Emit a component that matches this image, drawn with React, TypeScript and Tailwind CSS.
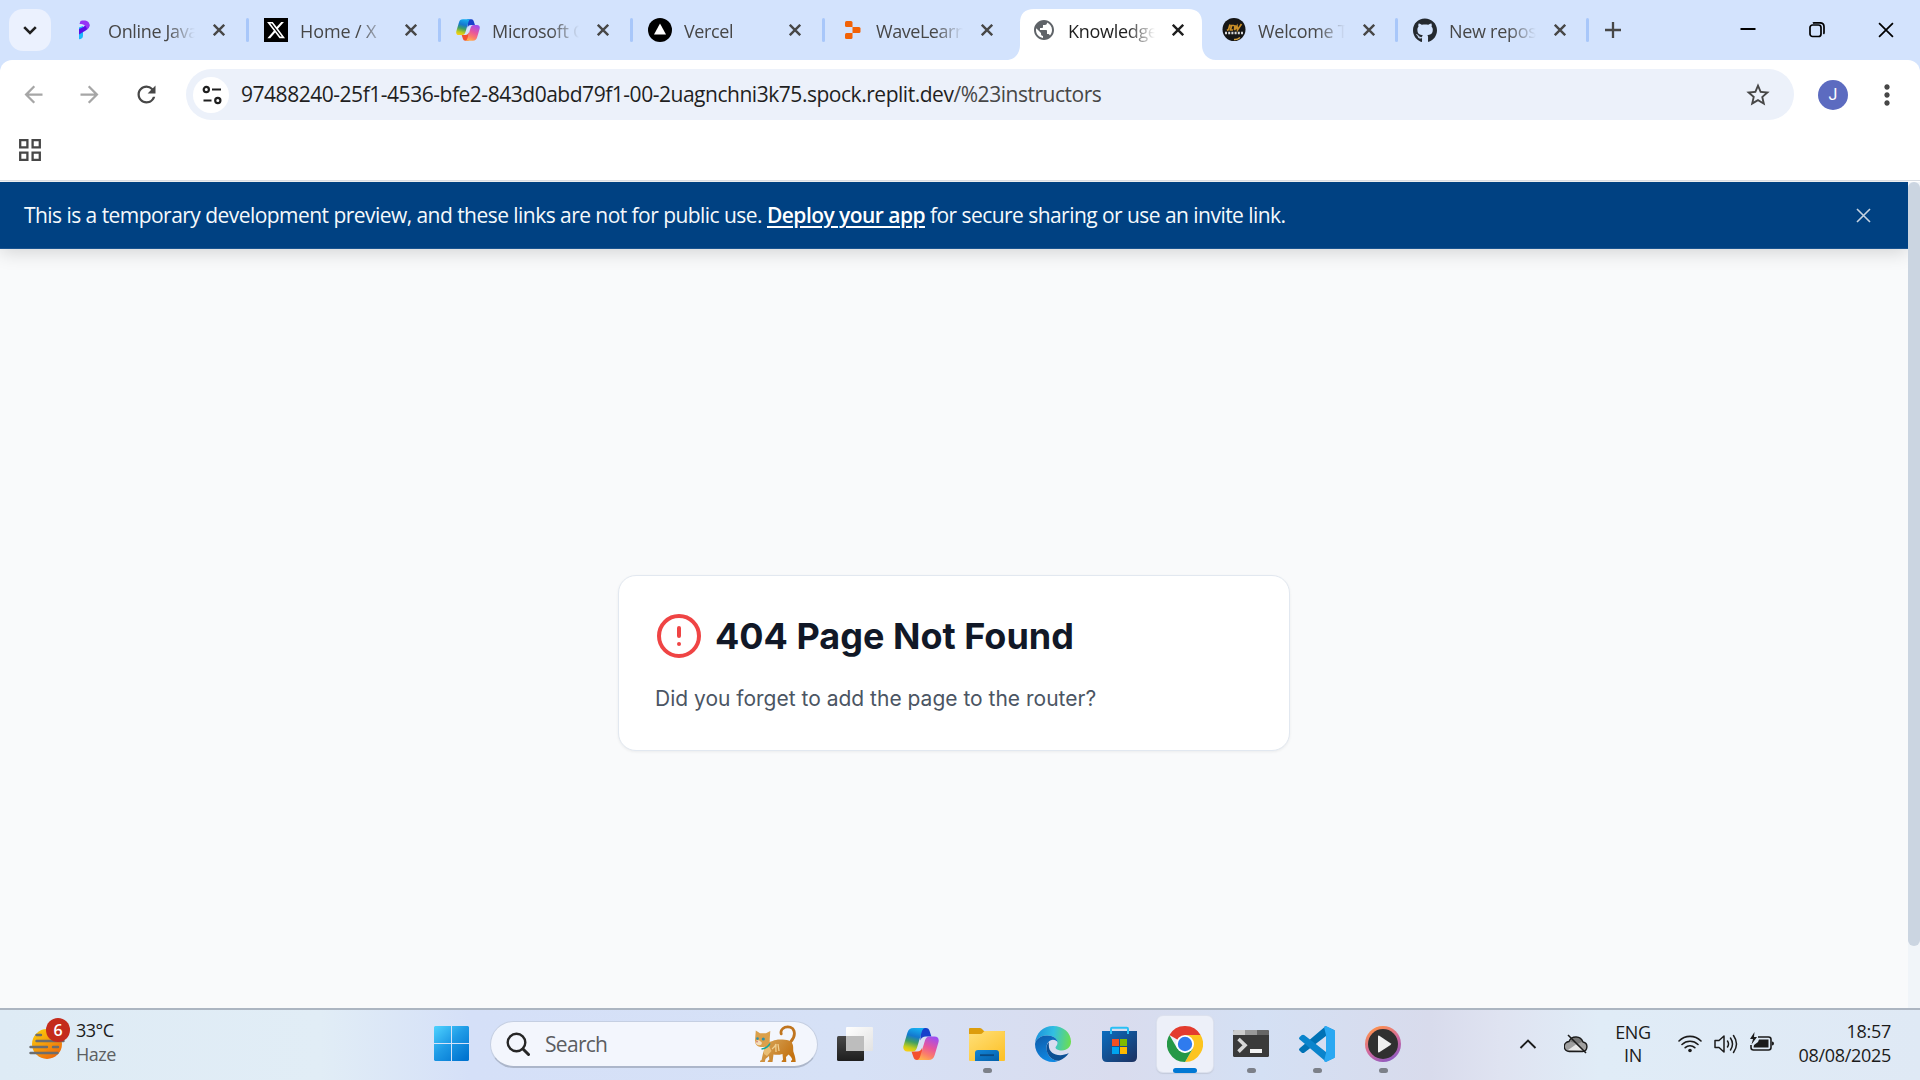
import React from "react";
import { MdArrowBack, MdArrowForward, MdRefresh, MdStarBorder, MdPublic, MdMoreVert } from "react-icons/md";
import { FaGithub, FaXTwitter } from "react-icons/fa6";

const UI = "font-['Segoe_UI','Open_Sans',sans-serif]";

function Cross({ className, s = 11, w = 2.4 }: { className?: string; s?: number; w?: number }) {
  return (
    <svg width={s} height={s} viewBox="0 0 12 12" className={className} fill="none" stroke="currentColor" strokeWidth={w}>
      <path d="M.8 .8 11.2 11.2M11.2 .8 .8 11.2" />
    </svg>
  );
}

function Copilot({ size, id }: { size: number; id: string }) {
  return (
    <svg width={size} height={size} viewBox="0 0 36 36">
      <defs>
        <linearGradient id={id + "a"} x1=".6" y1="0" x2=".35" y2="1">
          <stop offset="0" stopColor="#16aef0" />
          <stop offset=".35" stopColor="#1478cf" />
          <stop offset=".6" stopColor="#3f9f63" />
          <stop offset=".85" stopColor="#c2cc1c" />
          <stop offset="1" stopColor="#f4cf14" />
        </linearGradient>
        <linearGradient id={id + "b"} x1=".7" y1="0" x2=".3" y2="1">
          <stop offset="0" stopColor="#a04ef0" />
          <stop offset=".45" stopColor="#e8569b" />
          <stop offset=".75" stopColor="#fb7d6a" />
          <stop offset="1" stopColor="#ffb04e" />
        </linearGradient>
      </defs>
      <path d="M17 2h6c2 0 3 1.200 3.600 3l1.800 5.500h-5.500c-3 0-4.500 1-5.400 4z" fill="#173fcb" />
      <path d="M19 34h-5c-2 0-3-1.200-3.600-3L8.500 25.500H14c3 0 4.300-1.500 5.200-4z" fill="#f4502f" />
      <path d="M10.500 2H22c-2 .4-2.700 2-3.300 4l-4.500 15c-.9 3-2 4.500-5 4.500H4.500C1 25.500-.4 23 .6 19.500L4.300 7C5.300 3.500 7 2 10.500 2z" fill={`url(#${id}a)`} />
      <path d="M25.500 34H14c2-.4 2.700-2 3.300-4l4.500-15c.9-3 2-4.500 5-4.500h4.700c3.500 0 4.900 2.500 3.900 6L31.700 29c-1 3.500-2.700 5-6.200 5z" fill={`url(#${id}b)`} />
    </svg>
  );
}

const Programiz = () => (
  <svg width="24" height="24" viewBox="0 0 24 24">
    <path d="M7 9.500 11 8v9.500c0 2.500-1.500 3.800-4 3.800z" fill="#1ab8fb" />
    <path d="M7 13.500V11c4.500-2 6.500-3.200 6.500-4.500h4c0 5-4.500 6-10.500 10z" fill="#5a0fe8" />
    <path d="M8.500 3c5-1.500 9.500.5 9 4.500-.2 1.800-1 3-2.500 4C14.500 8 12 6 7.500 6z" fill="#9733f5" />
  </svg>
);

const XLogo = () => (
  <div className="flex h-6 w-6 items-center justify-center bg-black">
    <FaXTwitter size={20} className="text-white" />
  </div>
);

const VercelIcon = () => (
  <svg width="24" height="24" viewBox="0 0 24 24">
    <circle cx="12" cy="12" r="12" fill="#000" />
    <path d="M12 5.500 18 16.500H6z" fill="#fff" />
  </svg>
);

const Replit = () => (
  <svg width="24" height="24" viewBox="0 0 24 24" fill="#f26207">
    <path d="M5 4.500Q5 3 6.500 3H11q1.500 0 1.500 1.500V9H6.500Q5 9 5 7.500z" />
    <path d="M12.500 9H19q1.500 0 1.500 1.500v3Q20.500 15 19 15h-6.500z" />
    <path d="M5 16.500Q5 15 6.500 15h6v4.500Q12.500 21 11 21H6.500Q5 21 5 19.500z" />
  </svg>
);

const JW = () => (
  <svg width="24" height="24" viewBox="0 0 24 24">
    <circle cx="12" cy="11.500" r="11.500" fill="#161616" />
    <path d="M5 12.500l1.500-1L8 6.500M12 7.500H9.500L8.500 12H11M13 7l-.5 5L15 8l.5 4L19.500 6" fill="none" stroke="#c98f28" strokeWidth="1.700" />
    <path d="M3 15h18" stroke="#d8d8d8" strokeWidth="2.600" strokeDasharray="2 1.200" />
    <path d="M12 21.500q3 .5 6-2" fill="none" stroke="#d9a441" strokeWidth="1.500" />
  </svg>
);

type TabInfo = { title: string; icon: React.ReactNode; sep: boolean; cls: string; txt: string; active?: boolean };

const tabs: TabInfo[] = [
  { title: "Online Java", icon: <Programiz />, sep: true, cls: "w-[192px]", txt: "tracking-[-0.35px]" },
  { title: "Home / X", icon: <XLogo />, sep: true, cls: "w-[192px]", txt: "tracking-[-0.1px]" },
  { title: "Microsoft Co", icon: <Copilot size={26} id="t" />, sep: true, cls: "w-[192px]", txt: "tracking-[-0.3px]" },
  { title: "Vercel", icon: <VercelIcon />, sep: true, cls: "w-[192px]", txt: "tracking-[-0.4px]" },
  { title: "WaveLearn", icon: <Replit />, sep: false, cls: "w-[192px]", txt: "tracking-[-0.45px]" },
  { title: "Knowledge", icon: <MdPublic size={26} className="text-[#5f6368]" />, sep: false, cls: "w-[190px]", txt: "tracking-[-0.3px]", active: true },
  { title: "Welcome To", icon: <JW />, sep: true, cls: "w-[191px]", txt: "tracking-[-0.3px]" },
  { title: "New reposi", icon: <FaGithub size={25} className="text-[#24292f]" />, sep: true, cls: "w-[191px]", txt: "tracking-[-0.3px]" },
];

function Tab({ t }: { t: TabInfo }) {
  return (
    <div className={`relative flex h-[60px] shrink-0 items-center pl-4 ${t.cls}`}>
      {t.active && (
        <svg className="absolute top-[9px] left-[-10px]" width="210" height="51" viewBox="0 0 210 51">
          <path d="M0 51C9 51 14 44 14 36V14Q14 0 28 0H182Q196 0 196 14V36C196 44 201 51 210 51z" fill="#fff" />
        </svg>
      )}
      <div className="relative flex h-6 w-6 shrink-0 items-center justify-center">{t.icon}</div>
      <span
        className={`relative ml-3 w-[87px] shrink-0 overflow-hidden pt-[2px] text-[18px] leading-[28px] whitespace-nowrap [mask-image:linear-gradient(to_right,#000_68%,transparent_100%)] ${t.txt} ${t.active ? "text-[#1f1f1f]" : "text-[#474747]"}`}
      >
        {t.title}
      </span>
      <span className={`relative flex h-6 w-6 shrink-0 items-center justify-center ${t.active ? "ml-[11px] text-[#1f1f1f]" : "ml-3 text-[#474747]"}`}>
        <Cross s={12} w={2.4} />
      </span>
      {t.sep && <span className="mr-[-1px] ml-auto h-6 w-[3px] rounded-full bg-[#a8c7fa]" />}
    </div>
  );
}

function TabStrip() {
  return (
    <div className="flex h-[60px] items-center bg-[#d3e3fd]">
      <div className="ml-[9px] flex h-[42px] w-[42px] items-center justify-center rounded-[14px] bg-[#ebf1fe]">
        <svg width="14" height="9" viewBox="0 0 14 9" fill="none" stroke="#1f1f1f" strokeWidth="2.600">
          <path d="m1.200 1.200 5.800 5.800 5.800-5.800" />
        </svg>
      </div>
      <div className="ml-[5px] flex">
        {tabs.map((t) => (
          <Tab key={t.title} t={t} />
        ))}
      </div>
      <svg className="ml-[17px]" width="16" height="16" viewBox="0 0 16 16" stroke="#474747" strokeWidth="2.300">
        <path d="M8 0v16M0 8h16" />
      </svg>
      <svg className="ml-[119px]" width="16" height="16" viewBox="0 0 16 16">
        <path d="M.5 7h15" stroke="#000" strokeWidth="2" />
      </svg>
      <svg className="ml-[53px]" width="16" height="16" viewBox="0 0 16 16" fill="none" stroke="#000" strokeWidth="1.700">
        <rect x="1" y="3" width="11" height="11.500" rx="2.500" />
        <path d="M4 1.300q.5-.5 1.500-.5H11q4 0 4 4v5.600q0 1-.6 1.500" />
      </svg>
      <Cross s={16} w={1.300} className="ml-[53px] text-black" />
    </div>
  );
}

function Toolbar() {
  return (
    <div className="bg-[#d3e3fd]">
      <div className="flex h-[120px] flex-col rounded-t-[12px] bg-white">
        <div className="mt-[9px] flex h-[51px] items-center">
          <MdArrowBack size={27} className="ml-5 text-[#a6a6a6]" />
          <MdArrowForward size={27} className="ml-[29px] text-[#a6a6a6]" />
          <MdRefresh size={27} className="ml-[30px] text-[#474747]" />
          <div className="ml-[26px] flex h-[51px] w-[1608px] items-center rounded-full bg-[#ecf1fa]">
            <div className="ml-[7px] flex h-9 w-9 items-center justify-center rounded-full bg-white">
              <svg className="ml-px" width="20" height="20" viewBox="0 0 20 20" fill="none" stroke="#1f1f1f" strokeWidth="2.200">
                <circle cx="4.300" cy="4.500" r="2.600" />
                <path d="M10 4.500h9M1.500 15.500h8" />
                <circle cx="15.800" cy="15.500" r="2.600" />
              </svg>
            </div>
            <span className="ml-3 pb-px text-[21px] leading-[30px] tracking-[-0.47px] whitespace-nowrap text-[#1f1f1f]">
              97488240-25f1-4536-bfe2-843d0abd79f1-00-2uagnchni3k75.spock.replit.dev
              <span className="text-[#474747]">/%23instructors</span>
            </span>
            <MdStarBorder size={28} className="mr-[22px] ml-auto text-[#474747]" />
          </div>
          <div className="ml-6 flex h-[30px] w-[30px] items-center justify-center rounded-full bg-[#5c6bc0] font-['Roboto',sans-serif] text-[16px] text-white">J</div>
          <MdMoreVert size={32} className="ml-[23px] text-[#474747]" />
        </div>
        <svg className="mt-[19px] ml-[19px]" width="22" height="22" viewBox="0 0 22 22" fill="none" stroke="#474747" strokeWidth="2.300">
          <path d="M1.200 1.200h7.200v7.200H1.200zM13.600 1.200h7.200v7.200h-7.200zM1.200 13.600h7.200v7.200H1.200zM13.600 13.600h7.200v7.200h-7.200z" />
        </svg>
      </div>
    </div>
  );
}

function Page() {
  return (
    <div className="flex h-[828px] border-t border-[#d9dde3]">
      <div className="flex w-[1908px] flex-col overflow-hidden bg-[#f9fafb]">
        <div className="relative mt-px flex h-[67px] items-center border-b border-[#1a5490] bg-[#004182] pl-6 shadow-[0_3px_18px_rgba(0,0,0,0.16)]">
          <span className="text-[21px] leading-[30px] tracking-[-0.545px] whitespace-nowrap text-[#f5f9fc]">
            This is a temporary development preview, and these links are not for public use.{" "}
            <span className="font-semibold text-white underline decoration-2 underline-offset-[3px]">Deploy your app</span> for secure sharing or use an invite link.
          </span>
          <Cross s={15} w={1.300} className="mr-[37px] ml-auto text-[#c5d3e2]" />
        </div>
        <div className="flex grow justify-center pt-[326px]">
          <div className="h-[176px] w-[672px] rounded-[18px] border border-[#e2e8f0] bg-white px-9 pt-9 font-['Inter',sans-serif] shadow-[0_1px_3px_rgba(0,0,0,0.06)]">
            <div className="flex h-12 items-center">
              <svg width="48" height="48" viewBox="0 0 24 24" fill="none" stroke="#ef4444" strokeWidth="2" strokeLinecap="round" strokeLinejoin="round">
                <circle cx="12" cy="12" r="10" />
                <path d="M12 8v4M12 16h.01" />
              </svg>
              <h1 className="ml-3 text-[36px] leading-[48px] font-bold whitespace-nowrap text-[#111827]">404 Page Not Found</h1>
            </div>
            <p className="mt-6 text-[21px] leading-[30px] whitespace-nowrap text-[#4b5563]">Did you forget to add the page to the router?</p>
          </div>
        </div>
      </div>
      <div className="mt-px w-3 bg-[#f1f5f9]">
        <div className="h-[764px] rounded-full bg-[#cbd5e1]" />
      </div>
    </div>
  );
}

const Cat = () => (
  <svg width="46" height="38" viewBox="0 0 46 38">
    <defs>
      <linearGradient id="fur" x1="0" y1="0" x2="1" y2=".5">
        <stop offset="0" stopColor="#dca552" />
        <stop offset=".45" stopColor="#cf9240" />
        <stop offset="1" stopColor="#c47312" />
      </linearGradient>
    </defs>
    <path d="M38.500 17c3-3 4.500-7.500 3.500-11C41 2.300 36.500 1 33 2.300c-3.200 1.200-4.600 4-3.800 6.500" fill="none" stroke="#c0751f" strokeWidth="2.800" strokeLinecap="round" />
    <path d="M14 18c5-1 8-3.500 14-3.500 7 0 12 .5 13 6 .5 3-.3 5 1 8 1 2.500 1.500 5 1.700 8.500H39q-.4-1.500 1.200-2c-.3-2.500-1.700-4-3.700-5.500L34 32l.3 5h-4.600q-.4-1.500 1.300-2l-.5-6c-3.500 1-6.500 1-9 .5L20.500 37h-4.800q-.2-1.600 1.600-2L17 31l-3.500 3-.7 3H8q-.2-1.600 1.600-2c.7-4 1.400-7 2.400-10z" fill="url(#fur)" />
    <path d="M3.800 5.500 8 8.300l6-.1L18.300 6l-.6 8.500c.5 4.500-2.700 7.500-7.200 7.500-5 0-7.800-2.500-7.500-7z" fill="#dba04a" />
    <path d="M3.500 16.500c1.500-2 4-1.500 5 0 2 .5 1.700 3 0 3.600-2.200.6-5.300-.4-5-3.600z" fill="#f3ddbb" />
    <path d="m12 24 5-3 2.500 5-4.500 5-3-2z" fill="#e9bd74" />
    <path d="M20 24q3-2 4-5-.3 4 0 8M26 19l1 7" fill="none" stroke="#f0cf90" strokeWidth="1.300" />
    <path d="M9.500 24c4-.5 7-2.500 8.500-5.500" fill="none" stroke="#12a59a" strokeWidth="1.500" />
    <circle cx="5.500" cy="13.600" r="1.300" fill="#2d8fa8" />
    <circle cx="11.300" cy="14" r="1.600" fill="#2d8fa8" />
    <circle cx="5" cy="16.800" r=".8" fill="#c9605a" />
  </svg>
);

const StartLogo = () => (
  <svg width="36" height="36" viewBox="0 0 36 36">
    <defs>
      <linearGradient id="win" gradientUnits="userSpaceOnUse" x1="0" y1="0" x2="30" y2="34">
        <stop offset="0" stopColor="#4fd3ff" />
        <stop offset=".5" stopColor="#1f9be6" />
        <stop offset="1" stopColor="#0074d0" />
      </linearGradient>
    </defs>
    <path d="M1 0H17v17H0V1zM18 0h16l1 1V17H18zM0 18H17v17H1l-1-1zM18 18h17v16l-1 1H18z" fill="url(#win)" />
  </svg>
);

const TaskView = () => (
  <svg width="36" height="36" viewBox="0 0 36 36">
    <defs>
      <linearGradient id="tv" x1="0" y1="0" x2="0" y2="1">
        <stop offset="0" stopColor="#484848" />
        <stop offset="1" stopColor="#1e1e1e" />
      </linearGradient>
      <linearGradient id="tw" x1="0" y1="0" x2="1" y2="1">
        <stop offset="0" stopColor="#fff" />
        <stop offset="1" stopColor="#e2e2e2" />
      </linearGradient>
    </defs>
    <rect x="9" y="1" width="27" height="24" rx="1" fill="url(#tw)" />
    <rect x="0" y="10" width="27" height="25" rx="1.500" fill="url(#tv)" />
    <rect x="9" y="10" width="18" height="15" fill="#bdbdbd" />
  </svg>
);

const Explorer = () => (
  <svg width="36" height="36" viewBox="0 0 36 36">
    <defs>
      <linearGradient id="fo" x1="0" y1="0" x2=".8" y2="1">
        <stop offset="0" stopColor="#ffe07a" />
        <stop offset="1" stopColor="#fdc22a" />
      </linearGradient>
      <linearGradient id="fb" x1="0" y1="0" x2="1" y2="1">
        <stop offset="0" stopColor="#1286d8" />
        <stop offset="1" stopColor="#0560aa" />
      </linearGradient>
    </defs>
    <path d="M0 3q0-1 1-1h10q1.500 0 2.500 1.500L15 5h20q1 0 1 1v4H0z" fill="#dd9d0c" />
    <path d="M0 8h11q2 0 3-1.500L15.500 5H35q1 0 1 1v28q0 1-1 1H1q-1 0-1-1z" fill="url(#fo)" />
    <path d="M6 35V27q0-3 3-3h18q3 0 3 3v8z" fill="url(#fb)" />
    <path d="M11 29.200h14" stroke="#0b4a82" strokeWidth="1.800" />
  </svg>
);

const Edge = () => (
  <svg width="36" height="36" viewBox="0 0 36 36">
    <defs>
      <linearGradient id="e1" x1="0" y1=".4" x2="1" y2=".5">
        <stop offset="0" stopColor="#1c92dc" />
        <stop offset=".5" stopColor="#32bfe2" />
        <stop offset="1" stopColor="#6bde52" />
      </linearGradient>
      <linearGradient id="e2" x1="0" y1="0" x2=".4" y2="1">
        <stop offset="0" stopColor="#0e5aa8" />
        <stop offset="1" stopColor="#1088e2" />
      </linearGradient>
    </defs>
    <path d="M0 17C1 7 8 0 18 0c10.500 0 18 7 18 15.500 0 5.500-4 9-9 9-4.500 0-6.500-1.800-6.500-3 0-1 2-2 2-4.500C22.500 12.500 18 9.500 12 9.500 6 9.500 1.500 12.500 0 17z" fill="url(#e1)" />
    <path d="M0 18C1 12.500 6 9.500 12 9.500c6 0 10.500 3 10.500 7-.5-2-2.500-2.800-4.500-2.800-4 0-6.500 3.800-6.500 8C11.500 29 17 35 24 34.800 21.500 35.700 20 36 18 36 8 36 0 28 0 18z" fill="url(#e2)" />
    <path d="M14 16c-2 2-2.500 4-2.500 6C11.500 29 17 35 24 34.800c4.500-1.700 7.500-4.300 9.800-7.700-9 4.500-20 1.500-20-7.600 0-1.300 0-2.300.2-3.500z" fill="#0c4f94" />
  </svg>
);

const Store = () => (
  <svg className="ml-[-1px]" width="36" height="36" viewBox="0 0 36 36">
    <defs>
      <linearGradient id="st" x1="0" y1="0" x2="1" y2="1">
        <stop offset="0" stopColor="#0a6dc0" />
        <stop offset="1" stopColor="#1d3160" />
      </linearGradient>
    </defs>
    <path d="M1 5h35v26q0 5-5 5H6q-5 0-5-5z" fill="url(#st)" />
    <path d="M10 8V3q0-1.200 1.200-1.200h14.600Q27 1.800 27 3v5" fill="none" stroke="#2bc0f5" strokeWidth="2" />
    <path d="M11 13h7v7h-7z" fill="#f25022" />
    <path d="M19 13h7v7h-7z" fill="#7fba00" />
    <path d="M11 21h7v7h-7z" fill="#00a4ef" />
    <path d="M19 21h7v7h-7z" fill="#ffb900" />
  </svg>
);

const Chrome = () => (
  <svg width="36" height="36" viewBox="0 0 36 36">
    <path d="M18 18 2.410 9A18 18 0 0 1 33.590 9z" fill="#e33b2e" />
    <path d="M18 9H33.590A18 18 0 0 1 18 36L25.800 22.500z" fill="#fcc41f" />
    <path d="M2.410 9 10.200 22.500 18 27l7.800-4.500L18 36A18 18 0 0 1 2.410 9z" fill="#259847" />
    <circle cx="18" cy="18" r="9" fill="#fff" />
    <circle cx="18" cy="18" r="7.200" fill="#2f7bee" />
  </svg>
);

const Terminal = () => (
  <svg width="36" height="36" viewBox="0 0 36 36">
    <rect x="0" y="4" width="36" height="27" rx="1.500" fill="#3a3a3a" />
    <path d="M0 9V5.500Q0 4 1.500 4H12v5z" fill="#ccc" />
    <path d="M12 4h12v5H12z" fill="#999" />
    <path d="M24 4h10.500Q36 4 36 5.500V9H24z" fill="#666" />
    <path d="m5.500 13 6.500 6.300-6.500 6.300" fill="none" stroke="#d8d8d8" strokeWidth="3.600" />
    <path d="M17 23h12v4H17z" fill="#f2f2f2" />
  </svg>
);

const VSCode = () => (
  <svg width="36" height="36" viewBox="0 0 36 36">
    <path d="M26.500 .3 36 4.500 27 10 5.500 26.500q-1.500 1.200-3 0l-1.800-1.700q-1.400-1.300 0-2.600z" fill="#0072b5" />
    <path d="M27 35.800 36 31.500 27 26 5.500 9.300q-1.500-1.200-3 0L.7 11q-1.400 1.300 0 2.600z" fill="#0a84cc" />
    <path d="M27 0q-1.500.2-2 1l2 8v18l-2 8q.8.800 2 1l7.700-3.700Q36 31.600 36 30.500v-25q0-1.100-1.300-1.800z" fill="#2aa8f2" />
  </svg>
);

const Player = () => (
  <svg width="36" height="36" viewBox="0 0 36 36">
    <defs>
      <linearGradient id="pl" x1=".3" y1="0" x2=".8" y2="1">
        <stop offset="0" stopColor="#ff914a" />
        <stop offset=".5" stopColor="#d2699e" />
        <stop offset="1" stopColor="#8557c4" />
      </linearGradient>
    </defs>
    <circle cx="18" cy="18" r="18" fill="url(#pl)" />
    <circle cx="18" cy="18" r="15" fill="#303030" />
    <path d="M13 10.500v15q0 1.500 1.300.7L25.500 19q1-.8 0-1.700L14.300 9.800Q13 9 13 10.500z" fill="#f0f0f0" />
  </svg>
);

const apps: { name: string; icon: React.ReactNode; open?: boolean; active?: boolean }[] = [
  { name: "view", icon: <TaskView /> },
  { name: "copilot", icon: <Copilot size={36} id="b" /> },
  { name: "files", icon: <Explorer />, open: true },
  { name: "edge", icon: <Edge /> },
  { name: "store", icon: <Store /> },
  { name: "chrome", icon: <Chrome />, active: true },
  { name: "terminal", icon: <Terminal />, open: true },
  { name: "code", icon: <VSCode />, open: true },
  { name: "player", icon: <Player />, open: true },
];

function Weather() {
  return (
    <div className="ml-[28px] flex w-[406px] items-center pb-[5px]">
      <div className="relative h-[44px] w-[42px]">
        <svg width="42" height="44" viewBox="0 0 42 44">
          <defs>
            <linearGradient id="sun" x1="0" y1="0" x2=".7" y2="1">
              <stop offset="0" stopColor="#fcd30a" />
              <stop offset="1" stopColor="#ee6a0c" />
            </linearGradient>
          </defs>
          <circle cx="19" cy="24" r="15" fill="url(#sun)" />
          <path d="M8.500 15H13M8.500 21h27M2.500 27H19M25 27h5M2.500 33h27" stroke="#6d6d6d" strokeWidth="2.400" strokeLinecap="round" />
        </svg>
        <span className="absolute top-[-2px] left-[18px] flex h-6 w-6 items-center justify-center rounded-full bg-[#c42b1c] text-[16px] font-semibold text-white">6</span>
      </div>
      <div className="ml-[6px] flex flex-col pt-[1px] text-[18px] leading-6 tracking-[-0.5px]">
        <span className="text-[#1b1b1b]">33°C</span>
        <span className="text-[#5c5f62]">Haze</span>
      </div>
    </div>
  );
}

function Tray() {
  return (
    <div className="mr-[29px] ml-auto flex items-center text-[#1b1b1b]">
      <svg width="18" height="12" viewBox="0 0 18 12" fill="none" stroke="currentColor" strokeWidth="1.900">
        <path d="m1.500 10 7.500-7.500 7.500 7.500" />
      </svg>
      <svg className="ml-[27px]" width="24" height="24" viewBox="0 0 24 24">
        <path d="M5.500 19.500a5 5 0 0 1-.5-10 7.500 7.500 0 0 1 14 .5 4.800 4.800 0 0 1-.5 9.500z" fill="#a0a0a0" />
        <path d="M6 9.500a7 7 0 0 1 12.500 0l-5 2.500z" fill="#777" />
        <path d="m4 18 8-5.500 8 6z" fill="#e8e8e8" />
        <path d="M5.500 19.500a5 5 0 0 1-.5-10 7.500 7.500 0 0 1 14 .5 4.800 4.800 0 0 1-.5 9.500z" fill="none" stroke="#1b1b1b" strokeWidth="1.400" />
        <path d="m4 3 18 18" stroke="#1b1b1b" strokeWidth="1.600" />
      </svg>
      <div className="ml-[27px] flex w-9 flex-col items-center pb-px text-[18px] leading-[23px] tracking-[-0.3px]">
        <span>ENG</span>
        <span>IN</span>
      </div>
      <svg className="ml-[27px]" width="24" height="24" viewBox="0 0 24 24" fill="none" stroke="currentColor" strokeWidth="1.600" strokeLinecap="round">
        <path d="M1 9a15.500 15.500 0 0 1 22 0M4 12.500a11.500 11.500 0 0 1 16 0M7.200 15.700a7 7 0 0 1 9.600 0" />
        <circle cx="12" cy="18.500" r="1.800" fill="currentColor" stroke="none" />
      </svg>
      <svg className="ml-3" width="24" height="24" viewBox="0 0 24 24" fill="none" stroke="currentColor" strokeWidth="1.500" strokeLinecap="round" strokeLinejoin="round">
        <path d="M1 8.500h4l5-4.500v16l-5-4.500H1zM13.500 9q2 3 0 6M16.500 6q4 6 0 12M19.500 3.500q6 8.500 0 17" />
      </svg>
      <svg className="ml-3" width="24" height="24" viewBox="0 0 24 24" fill="none">
        <path d="M8 5h10.500Q21 5 21 7.500v8q0 2.500-2.500 2.500h-15Q1 18 1 15.500V13" stroke="currentColor" strokeWidth="1.600" />
        <path d="M22 9.500q2 0 2 2t-2 2z" fill="currentColor" />
        <path d="M9 7.500h9.500v8h-15L4 13l4-3z" fill="currentColor" />
        <path d="M4.500 0 0 7h3l-1.500 5.500L7 5H4z" fill="currentColor" />
      </svg>
      <div className="ml-[25px] flex w-[92px] flex-col items-end pb-[3px] text-[18px] leading-6 tracking-[-0.3px] whitespace-nowrap">
        <span>18:57</span>
        <span>08/08/2025</span>
      </div>
    </div>
  );
}

function Taskbar() {
  return (
    <div className="flex h-[72px] items-center border-t-2 border-[#acb5c1] bg-[linear-gradient(90deg,#deebf5_0px,#e1edf6_320px,#d5e0f8_470px,#d6e1f6_850px,#d9dcee_1120px,#d4e0f4_1260px,#d8dbec_1430px,#dfe3f1_1500px,#e0ecf7_1600px,#dfe9f5_1920px)] pb-[2px]">
      <Weather />
      <div>
        <StartLogo />
      </div>
      <div className="ml-5 flex h-[47px] w-[328px] items-center rounded-full border border-b-2 border-[#c5cfe2] border-b-[#acb6ca] bg-[#f3f6fd]">
        <svg className="ml-[15px]" width="24" height="24" viewBox="0 0 24 24" fill="none" stroke="#262626" strokeWidth="2.400" strokeLinecap="round">
          <circle cx="10.500" cy="10.500" r="8.800" />
          <path d="m17 17 5.500 5.500" strokeWidth="3" />
        </svg>
        <span className="ml-[15px] text-[21px] leading-[30px] tracking-[-0.7px] text-[#5b5d61]">Search</span>
        <span className="mr-[19px] ml-auto">
          <Cat />
        </span>
      </div>
      <div className="ml-[9px] flex gap-[10px]">
        {apps.map((a) => (
          <div
            key={a.name}
            className={`relative flex h-14 w-14 items-center justify-center rounded-[6px] ${a.active ? "bg-[#edf0f9] shadow-[0_0_0_1px_#dce1ee,0_1px_1px_1px_#c4cadb]" : ""}`}
          >
            {a.icon}
            {a.open && <span className="absolute bottom-[-1px] left-[24px] h-[5px] w-[9px] rounded-full bg-[#7c8089]" />}
            {a.active && <span className="absolute bottom-[-1px] left-4 h-[5px] w-6 rounded-full bg-[#0078d4]" />}
          </div>
        ))}
      </div>
      <Tray />
    </div>
  );
}

export default function App() {
  return (
    <div className={`flex h-[1080px] w-[1920px] flex-col overflow-hidden bg-white ${UI}`}>
      <TabStrip />
      <Toolbar />
      <Page />
      <Taskbar />
    </div>
  );
}
